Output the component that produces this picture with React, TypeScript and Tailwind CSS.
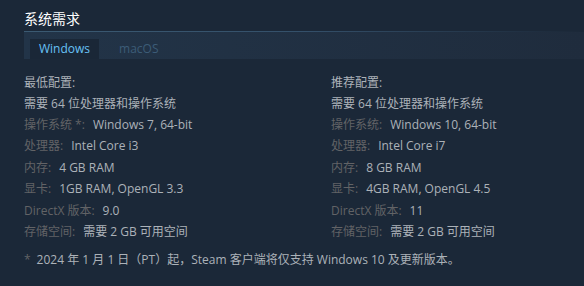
import React from "react";

const minimum = [
  { label: "操作系统 *:", value: "Windows 7, 64-bit" },
  { label: "处理器:", value: "Intel Core i3" },
  { label: "内存:", value: "4 GB RAM" },
  { label: "显卡:", value: "1GB RAM, OpenGL 3.3" },
  { label: "DirectX 版本:", value: "9.0" },
  { label: "存储空间:", value: "需要 2 GB 可用空间" },
];

const recommended = [
  { label: "操作系统:", value: "Windows 10, 64-bit" },
  { label: "处理器:", value: "Intel Core i7" },
  { label: "内存:", value: "8 GB RAM" },
  { label: "显卡:", value: "4GB RAM, OpenGL 4.5" },
  { label: "DirectX 版本:", value: "11" },
  { label: "存储空间:", value: "需要 2 GB 可用空间" },
];

function SpecColumn({
  title,
  rows,
}: {
  title: string;
  rows: { label: string; value: string }[];
}) {
  return (
    <div className="flex flex-col">
      <div className="h-[20px] leading-[20px] text-[#acb2b8]">{title}</div>
      <div className="h-[21px] leading-[21px] text-[#acb2b8]">
        需要 64 位处理器和操作系统
      </div>
      {rows.map((r) => (
        <div key={r.label} className="h-[21.4px] leading-[21.4px] flex gap-[8px]">
          <span className="text-[#626366]">{r.label}</span>
          <span className="text-[#acb2b8]">{r.value}</span>
        </div>
      ))}
    </div>
  );
}

export default function App() {
  return (
    <div
      className="w-[584px] h-[286px] bg-[#1b2838] overflow-hidden text-[12px]"
      style={{ fontFamily: '"Open Sans", "Noto Sans CJK SC", sans-serif' }}
    >
      <div className="pl-[24px] pt-[9px]">
        <h2 className="text-[14px] leading-[19px] text-white font-normal">
          系统需求
        </h2>
        <div className="mt-[3px] h-[1px] bg-gradient-to-r from-[#3b5a72] via-[#34506a] to-[#1b2838]" />
        <div className="h-[27px] pl-[6px] pt-[7px] flex items-stretch bg-gradient-to-r from-[#223448] to-[#1f2c3d]">
          <div className="px-[9px] flex items-center bg-[#1a2737] text-[#67c1f5] text-[12px]">
            Windows
          </div>
          <div className="px-[20px] flex items-center text-[#3c5c77] text-[12px]">
            macOS
          </div>
        </div>
        <div className="mt-[14px] grid grid-cols-[307px_1fr]">
          <SpecColumn title="最低配置:" rows={minimum} />
          <SpecColumn title="推荐配置:" rows={recommended} />
        </div>
        <div className="mt-[8px] h-[20px] leading-[20px] flex gap-[6px]">
          <span className="text-[#626366]">*</span>
          <span className="text-[#acb2b8]">
            2024 年 1 月 1 日（PT）起，Steam 客户端将仅支持 Windows 10 及更新版本。
          </span>
        </div>
      </div>
    </div>
  );
}
